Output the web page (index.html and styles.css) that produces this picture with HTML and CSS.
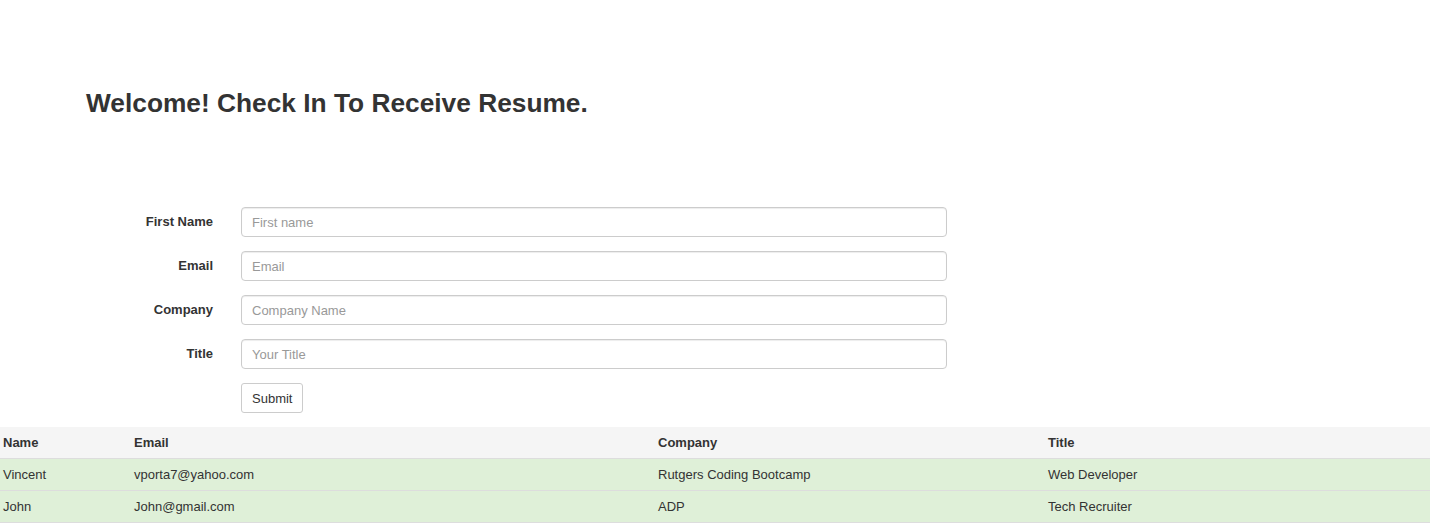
FILE: index.html
```html
<!DOCTYPE html>
<html>
<head>
<meta charset="utf-8">
<link rel="stylesheet" href="styles.css">
</head>
<body>
<div class="hero">
  <h1 class="title">Welcome! Check In To Receive Resume.</h1>
</div>
<form class="form">
  <div class="row">
    <label class="label">First Name</label>
    <input class="input" type="text" placeholder="First name">
  </div>
  <div class="row">
    <label class="label">Email</label>
    <input class="input" type="text" placeholder="Email">
  </div>
  <div class="row">
    <label class="label">Company</label>
    <input class="input" type="text" placeholder="Company Name">
  </div>
  <div class="row">
    <label class="label">Title</label>
    <input class="input" type="text" placeholder="Your Title">
  </div>
  <div class="row">
    <span class="label"></span>
    <button class="btn" type="button">Submit</button>
  </div>
</form>
<table class="table">
  <thead>
    <tr class="head"><th class="c1">Name</th><th class="c2">Email</th><th class="c3">Company</th><th class="c4">Title</th></tr>
  </thead>
  <tbody>
    <tr class="ok"><td>Vincent</td><td>vporta7@yahoo.com</td><td>Rutgers Coding Bootcamp</td><td>Web Developer</td></tr>
    <tr class="ok"><td>John</td><td>John@gmail.com</td><td>ADP</td><td>Tech Recruiter</td></tr>
  </tbody>
</table>
</body>
</html>
```
FILE: styles.css
```css
html, body {
  margin: 0;
  padding: 0;
  background: #fff;
  font-family: "Liberation Sans", Arial, sans-serif;
  font-size: 13px;
  color: #333;
}
.hero {
  padding: 86px 0 0 86px;
  height: 120px;
  box-sizing: border-box;
}
.title {
  margin: 0;
  font-size: 26.3px;
  font-weight: bold;
  line-height: 34px;
  color: #333;
}
.form {
  margin-top: 87px;
  display: flex;
  flex-direction: column;
  gap: 14px;
}
.row {
  display: flex;
  align-items: center;
  gap: 28px;
}
.label {
  width: 213px;
  text-align: right;
  font-weight: bold;
  font-size: 13px;
  line-height: 18px;
}
.input {
  box-sizing: border-box;
  width: 706px;
  height: 30px;
  padding: 0 10px;
  border: 1px solid #ccc;
  border-radius: 4px;
  font-family: inherit;
  font-size: 13px;
  color: #555;
  box-shadow: inset 0 1px 1px rgba(0,0,0,.075);
  outline: none;
}
.input::placeholder { color: #999; }
.btn {
  box-sizing: border-box;
  height: 30px;
  padding: 0 10px;
  background: #fff;
  border: 1px solid #ccc;
  border-radius: 3px;
  font-family: inherit;
  font-size: 13px;
  color: #333;
}
.table {
  margin-top: 14px;
  width: 100%;
  border-collapse: collapse;
  table-layout: fixed;
}
.table th, .table td {
  text-align: left;
  padding: 0 3px;
  height: 31px;
  border-bottom: 1px solid #ddd;
  font-size: 13px;
  line-height: 18px;
}
.table th { font-weight: bold; }
.head { background: #f5f5f5; }
.ok { background: #dff0d8; }
.c1 { width: 125px; }
.c2 { width: 518px; }
.c3 { width: 384px; }
.c4 { width: auto; }
```
